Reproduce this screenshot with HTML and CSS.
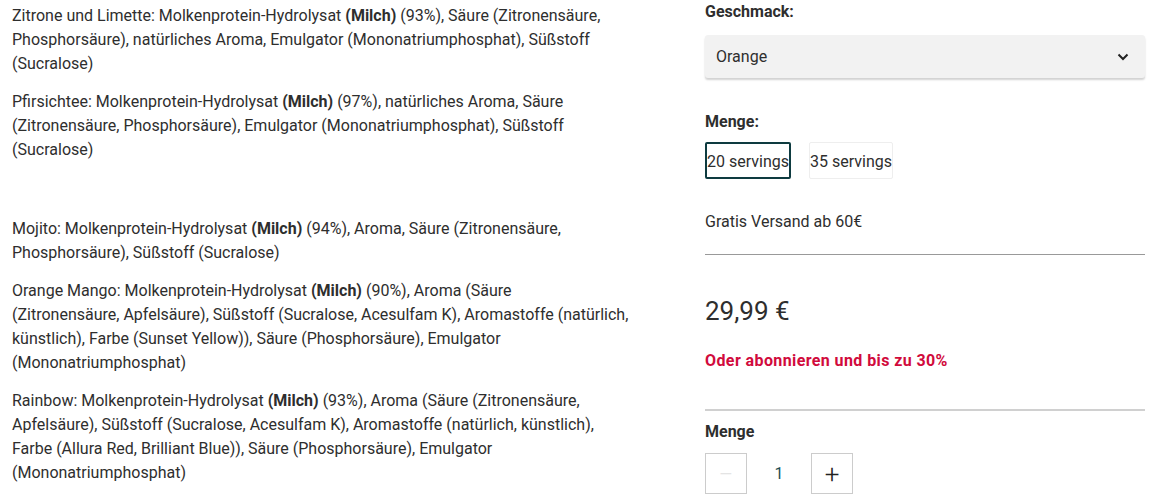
FILE: index.html
```html
<!DOCTYPE html>
<html lang="de">
<head>
    <meta charset="UTF-8">
    <meta name="viewport" content="width=device-width, initial-scale=1.0">
    <title>Molkenprotein-Hydrolysat</title>
    <link rel="stylesheet" href="styles.css">
</head>
<body>
    <div class="product">
        <section class="ingredients">
            <p>Zitrone und Limette: Molkenprotein-Hydrolysat <b>(Milch)</b> (93%), Säure (Zitronensäure,<br>Phosphorsäure), natürliches Aroma, Emulgator (Mononatriumphosphat), Süßstoff<br>(Sucralose)</p>
            <p>Pfirsichtee: Molkenprotein-Hydrolysat <b>(Milch)</b> (97%), natürliches Aroma, Säure<br>(Zitronensäure, Phosphorsäure), Emulgator (Mononatriumphosphat), Süßstoff<br>(Sucralose)</p>
            <p class="spacer">&nbsp;</p>
            <p>Mojito: Molkenprotein-Hydrolysat <b>(Milch)</b> (94%), Aroma, Säure (Zitronensäure,<br>Phosphorsäure), Süßstoff (Sucralose)</p>
            <p>Orange Mango: Molkenprotein-Hydrolysat <b>(Milch)</b> (90%), Aroma (Säure<br>(Zitronensäure, Apfelsäure), Süßstoff (Sucralose, Acesulfam K), Aromastoffe (natürlich,<br>künstlich), Farbe (Sunset Yellow)), Säure (Phosphorsäure), Emulgator<br>(Mononatriumphosphat)</p>
            <p>Rainbow: Molkenprotein-Hydrolysat <b>(Milch)</b> (93%), Aroma (Säure (Zitronensäure,<br>Apfelsäure), Süßstoff (Sucralose, Acesulfam K), Aromastoffe (natürlich, künstlich),<br>Farbe (Allura Red, Brilliant Blue)), Säure (Phosphorsäure), Emulgator<br>(Mononatriumphosphat)</p>
        </section>

        <aside class="buybox">
            <div class="label">Geschmack:</div>
            <div class="select">
                <span>Orange</span>
                <svg width="12" height="8" viewBox="0 0 12 8"><polyline points="1.5,1.5 6,6 10.5,1.5" fill="none" stroke="#222" stroke-width="2"/></svg>
            </div>

            <div class="label menge">Menge:</div>
            <div class="sizes">
                <button class="size active">20 servings</button>
                <button class="size">35 servings</button>
            </div>

            <div class="shipping">Gratis Versand ab 60€</div>
            <hr class="line">

            <div class="price">29,99 €</div>
            <div class="promo">Oder abonnieren und bis zu 30%</div>
            <hr class="line light">

            <div class="label qty-label">Menge</div>
            <div class="qty">
                <button class="qty-btn minus">&minus;</button>
                <span class="qty-value">1</span>
                <button class="qty-btn">+</button>
            </div>
        </aside>
    </div>
</body>
</html>
```
FILE: styles.css
```css
body {
    font-family: Roboto, Arial, sans-serif;
    color: #2e2e2e;
    margin: 0;
    padding: 0;
    background: #fff;
}
.product {
    display: flex;
    padding-left: 12px;
}
.ingredients {
    width: 693px;
    padding-top: 4px;
}
.ingredients p {
    margin: 0 0 14px;
    font-size: 16px;
    line-height: 24px;
    white-space: nowrap;
}
.ingredients p.spacer {
    height: 27px;
    line-height: 27px;
}
.buybox {
    width: 440px;
    font-size: 16px;
}
.label {
    font-weight: bold;
    line-height: 24px;
}
.select {
    display: flex;
    align-items: center;
    justify-content: space-between;
    height: 43px;
    margin-top: 11px;
    padding: 0 16px 0 11px;
    background: #f2f2f2;
    border-radius: 3px;
    box-shadow: 0 2px 2px rgba(0, 0, 0, 0.18);
    box-sizing: border-box;
}
.menge {
    margin-top: 32px;
}
.sizes {
    display: flex;
    gap: 18px;
    margin-top: 8px;
}
.size {
    font-family: inherit;
    font-size: 16px;
    color: #2e2e2e;
    height: 37px;
    padding: 2px 0 0;
    background: #fff;
    border: 1px solid #eee;
    border-radius: 2px;
    white-space: nowrap;
}
.size.active {
    border: 2px solid #0e3b40;
}
.shipping {
    margin-top: 31px;
    line-height: 24px;
}
.line {
    margin: 20px 0 0;
    border: 0;
    border-top: 1px solid #999;
}
.line.light {
    margin-top: 36px;
    border-top: 2px solid #d0d0d0;
}
.price {
    margin-top: 40px;
    font-size: 26px;
    line-height: 32px;
}
.promo {
    margin-top: 22px;
    line-height: 24px;
    font-weight: bold;
    letter-spacing: 0.4px;
    color: #d10a3c;
}
.qty-label {
    margin-top: 9px;
}
.qty {
    display: flex;
    align-items: center;
    margin-top: 9px;
}
.qty-btn {
    width: 42px;
    height: 41px;
    padding: 0;
    background: #fff;
    border: 1px solid #ccc;
    font-family: inherit;
    font-size: 26px;
    font-weight: 300;
    color: #222;
}
.qty-btn.minus {
    color: #e4e4e4;
}
.qty-value {
    width: 64px;
    text-align: center;
    color: #1d4e54;
}
```
